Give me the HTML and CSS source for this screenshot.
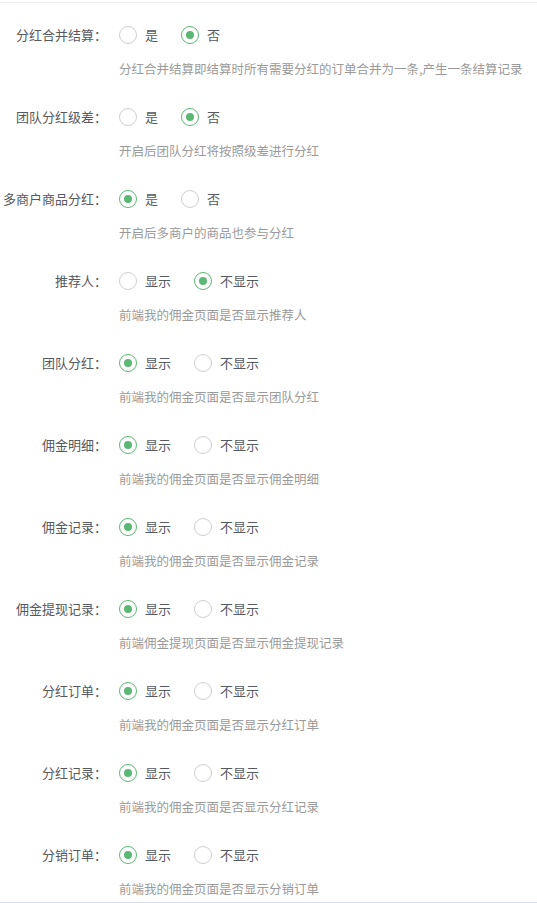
FILE: index.html
```html
<!DOCTYPE html>
<html lang="zh-CN">
<head>
<meta charset="utf-8">
<title>分红设置</title>
<link rel="stylesheet" href="styles.css">
</head>
<body>
<div class="page">
  <div class="form">
    <div class="item">
      <div class="row">
        <label class="label">分红合并结算：</label>
        <div class="radios">
          <span class="radio"><i class="dot"></i>是</span>
          <span class="radio on"><i class="dot"></i>否</span>
        </div>
      </div>
      <div class="desc">分红合并结算即结算时所有需要分红的订单合并为一条,产生一条结算记录</div>
    </div>
    <div class="item">
      <div class="row">
        <label class="label">团队分红级差：</label>
        <div class="radios">
          <span class="radio"><i class="dot"></i>是</span>
          <span class="radio on"><i class="dot"></i>否</span>
        </div>
      </div>
      <div class="desc">开启后团队分红将按照级差进行分红</div>
    </div>
    <div class="item">
      <div class="row">
        <label class="label">多商户商品分红：</label>
        <div class="radios">
          <span class="radio on"><i class="dot"></i>是</span>
          <span class="radio"><i class="dot"></i>否</span>
        </div>
      </div>
      <div class="desc">开启后多商户的商品也参与分红</div>
    </div>
    <div class="item">
      <div class="row">
        <label class="label">推荐人：</label>
        <div class="radios">
          <span class="radio"><i class="dot"></i>显示</span>
          <span class="radio on"><i class="dot"></i>不显示</span>
        </div>
      </div>
      <div class="desc">前端我的佣金页面是否显示推荐人</div>
    </div>
    <div class="item">
      <div class="row">
        <label class="label">团队分红：</label>
        <div class="radios">
          <span class="radio on"><i class="dot"></i>显示</span>
          <span class="radio"><i class="dot"></i>不显示</span>
        </div>
      </div>
      <div class="desc">前端我的佣金页面是否显示团队分红</div>
    </div>
    <div class="item">
      <div class="row">
        <label class="label">佣金明细：</label>
        <div class="radios">
          <span class="radio on"><i class="dot"></i>显示</span>
          <span class="radio"><i class="dot"></i>不显示</span>
        </div>
      </div>
      <div class="desc">前端我的佣金页面是否显示佣金明细</div>
    </div>
    <div class="item">
      <div class="row">
        <label class="label">佣金记录：</label>
        <div class="radios">
          <span class="radio on"><i class="dot"></i>显示</span>
          <span class="radio"><i class="dot"></i>不显示</span>
        </div>
      </div>
      <div class="desc">前端我的佣金页面是否显示佣金记录</div>
    </div>
    <div class="item">
      <div class="row">
        <label class="label">佣金提现记录：</label>
        <div class="radios">
          <span class="radio on"><i class="dot"></i>显示</span>
          <span class="radio"><i class="dot"></i>不显示</span>
        </div>
      </div>
      <div class="desc">前端佣金提现页面是否显示佣金提现记录</div>
    </div>
    <div class="item">
      <div class="row">
        <label class="label">分红订单：</label>
        <div class="radios">
          <span class="radio on"><i class="dot"></i>显示</span>
          <span class="radio"><i class="dot"></i>不显示</span>
        </div>
      </div>
      <div class="desc">前端我的佣金页面是否显示分红订单</div>
    </div>
    <div class="item">
      <div class="row">
        <label class="label">分红记录：</label>
        <div class="radios">
          <span class="radio on"><i class="dot"></i>显示</span>
          <span class="radio"><i class="dot"></i>不显示</span>
        </div>
      </div>
      <div class="desc">前端我的佣金页面是否显示分红记录</div>
    </div>
    <div class="item">
      <div class="row">
        <label class="label">分销订单：</label>
        <div class="radios">
          <span class="radio on"><i class="dot"></i>显示</span>
          <span class="radio"><i class="dot"></i>不显示</span>
        </div>
      </div>
      <div class="desc">前端我的佣金页面是否显示分销订单</div>
    </div>
  </div>
</div>
</body>
</html>
```
FILE: styles.css
```css
* { box-sizing: border-box; }
html, body { margin: 0; padding: 0; background: #fff; }
body {
  font-family: "Noto Sans CJK SC", "Noto Sans", sans-serif;
  color: #606266;
}
.page {
  padding-top: 2px;
}
.form {
  border-top: 1px solid #eeeeee;
  border-bottom: 1px solid #d5dff0;
  padding: 22px 0 4px;
  display: flex;
  flex-direction: column;
  gap: 29px;
}
.item {
  display: flex;
  flex-direction: column;
}
.row {
  display: flex;
  align-items: center;
  height: 20px;
}
.label {
  width: 119px;
  flex: none;
  text-align: right;
  padding-right: 12px;
  font-size: 13px;
  line-height: 20px;
  color: #555a60;
  white-space: nowrap;
}
.radios {
  display: flex;
  align-items: center;
}
.radio {
  display: flex;
  align-items: center;
  font-size: 13px;
  line-height: 20px;
  color: #555a60;
  margin-right: 23px;
}
.dot {
  width: 18px;
  height: 18px;
  border-radius: 50%;
  border: 1.5px solid #cfcfcf;
  margin-right: 8px;
  display: flex;
  align-items: center;
  justify-content: center;
  flex: none;
}
.radio.on .dot {
  border-color: #5bb874;
}
.radio.on .dot::after {
  content: "";
  width: 8px;
  height: 8px;
  border-radius: 50%;
  background: #5bb874;
}
.desc {
  margin-top: 15px;
  padding-left: 119px;
  font-size: 12.5px;
  line-height: 18px;
  color: #9a9a9a;
  white-space: nowrap;
}
```
